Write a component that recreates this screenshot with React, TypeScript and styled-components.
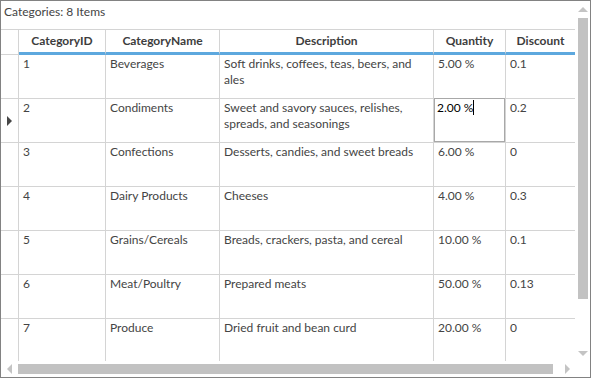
import React from 'react';
import styled, { createGlobalStyle } from 'styled-components';

const GlobalStyle = createGlobalStyle`
  html, body {
    margin: 0;
    padding: 0;
    background: #ffffff;
  }
  body {
    font-family: "Segoe UI", Lato, "Noto Sans", sans-serif;
    font-size: 12px;
    color: #444444;
  }
`;

const columns = [
  { key: 'id', title: 'CategoryID', width: 87 },
  { key: 'name', title: 'CategoryName', width: 114 },
  { key: 'desc', title: 'Description', width: 214 },
  { key: 'qty', title: 'Quantity', width: 72 },
  { key: 'disc', title: 'Discount', width: 69 },
];

// only the rows that fit in the viewport
const rows = [
  ['1', 'Beverages', 'Soft drinks, coffees, teas, beers, and ales', '5.00 %', '0.1'],
  ['2', 'Condiments', 'Sweet and savory sauces, relishes, spreads, and seasonings', '2.00 %', '0.2'],
  ['3', 'Confections', 'Desserts, candies, and sweet breads', '6.00 %', '0'],
  ['4', 'Dairy Products', 'Cheeses', '4.00 %', '0.3'],
  ['5', 'Grains/Cereals', 'Breads, crackers, pasta, and cereal', '10.00 %', '0.1'],
  ['6', 'Meat/Poultry', 'Prepared meats', '50.00 %', '0.13'],
  ['7', 'Produce', 'Dried fruit and bean curd', '20.00 %', '0'],
];

const Window = styled.div`
  box-sizing: border-box;
  width: 591px;
  height: 378px;
  border: 1px solid #828282;
  display: grid;
  grid-template-columns: 574px 15px;
  grid-template-rows: 360px 16px;
  background: #ffffff;
`;

const Main = styled.div`
  display: flex;
  flex-direction: column;
  min-height: 0;
`;

const Caption = styled.div`
  height: 28px;
  padding: 3px 0 0 3px;
  box-sizing: border-box;
  line-height: 16px;
  color: #444;
`;

const Viewport = styled.div`
  flex: 1;
  overflow: hidden;
`;

const HeaderRow = styled.div`
  display: flex;
  border-top: 1px solid #d4d4d4;
`;

const HeaderCorner = styled.div`
  width: 18px;
  box-sizing: border-box;
  height: 25px;
  border-right: 1px solid #d4d4d4;
  border-bottom: 1px solid #d4d4d4;
`;

const HeaderCell = styled.div<{ $w: number; $last?: boolean }>`
  width: ${p => p.$w}px;
  box-sizing: border-box;
  height: 25px;
  display: flex;
  align-items: center;
  justify-content: center;
  border-right: ${p => (p.$last ? 'none' : '1px solid #d4d4d4')};
  border-bottom: 3px solid #5da8de;
  font-weight: bold;
  color: #3d3d3d;
  padding-bottom: 2px;
`;

const Row = styled.div`
  display: flex;
  height: 44px;
`;

const RowHeader = styled.div`
  width: 18px;
  box-sizing: border-box;
  border-right: 1px solid #d4d4d4;
  border-bottom: 1px solid #d4d4d4;
  display: flex;
  align-items: center;
  justify-content: center;
`;

const CurrentMark = styled.div`
  width: 0;
  height: 0;
  border-top: 5px solid transparent;
  border-bottom: 5px solid transparent;
  border-left: 5px solid #474747;
  margin-top: 1px;
`;

const Cell = styled.div<{ $w: number; $last?: boolean; $editing?: boolean }>`
  width: ${p => p.$w}px;
  box-sizing: border-box;
  border-right: ${p => (p.$last ? 'none' : '1px solid #d4d4d4')};
  border-bottom: 1px solid #d4d4d4;
  padding: ${p => (p.$editing ? '2px 3px 0 3px' : '1px 6px 0 4px')};
  line-height: 16px;
  color: ${p => (p.$editing ? '#000' : '#444')};
  box-shadow: ${p => (p.$editing ? 'inset 0 0 0 1px #a8a8a8' : 'none')};
  margin-top: ${p => (p.$editing ? '-1px' : '0')};
  overflow: hidden;
`;

const Caret = styled.span`
  display: inline-block;
  width: 1px;
  height: 15px;
  background: #000;
  vertical-align: -3px;
`;

const VScroll = styled.div`
  display: flex;
  flex-direction: column;
  align-items: center;
`;

const HScroll = styled.div`
  display: flex;
  align-items: center;
`;

const ArrowButton = styled.div`
  width: 16px;
  height: 16px;
  flex: none;
  display: flex;
  align-items: center;
  justify-content: center;
`;

const VThumb = styled.div`
  width: 10px;
  height: 281px;
  margin-top: 1px;
  margin-left: 1px;
  background: #c2c2c2;
`;

const HThumb = styled.div`
  width: 535px;
  height: 10px;
  margin-left: 1px;
  background: #c2c2c2;
`;

const Spacer = styled.div`
  flex: 1;
`;

const Arrow = ({ dir }: { dir: 'up' | 'down' | 'left' | 'right' }) => {
  const pts = {
    up: '0,5 5,0 10,5',
    down: '0,0 10,0 5,5',
    left: '5,0 5,10 0,5',
    right: '0,0 5,5 0,10',
  }[dir];
  const vertical = dir === 'up' || dir === 'down';
  return (
    <svg width={vertical ? 10 : 5} height={vertical ? 5 : 10} viewBox={vertical ? '0 0 10 5' : '0 0 5 10'}>
      <polygon points={pts} fill="#c4c4c4" />
    </svg>
  );
};

const App: React.FC = () => {
  return (
    <>
      <GlobalStyle />
      <Window>
        <Main>
          <Caption>Categories: 8 Items</Caption>
          <Viewport>
            <HeaderRow>
              <HeaderCorner />
              {columns.map((c, i) => (
                <HeaderCell key={c.key} $w={c.width} $last={i === columns.length - 1}>
                  {c.title}
                </HeaderCell>
              ))}
            </HeaderRow>
            {rows.map((r, ri) => (
              <Row key={r[0]}>
                <RowHeader>{ri === 1 && <CurrentMark />}</RowHeader>
                {r.map((v, ci) => {
                  const editing = ri === 1 && ci === 3;
                  return (
                    <Cell
                      key={ci}
                      $w={columns[ci].width}
                      $last={ci === columns.length - 1}
                      $editing={editing}
                    >
                      {v}
                      {editing && <Caret />}
                    </Cell>
                  );
                })}
              </Row>
            ))}
          </Viewport>
        </Main>
        <VScroll>
          <ArrowButton>
            <Arrow dir="up" />
          </ArrowButton>
          <VThumb />
          <Spacer />
          <ArrowButton>
            <Arrow dir="down" />
          </ArrowButton>
        </VScroll>
        <HScroll>
          <ArrowButton>
            <Arrow dir="left" />
          </ArrowButton>
          <HThumb />
          <Spacer />
          <ArrowButton>
            <Arrow dir="right" />
          </ArrowButton>
        </HScroll>
        <div />
      </Window>
    </>
  );
};

export default App;
